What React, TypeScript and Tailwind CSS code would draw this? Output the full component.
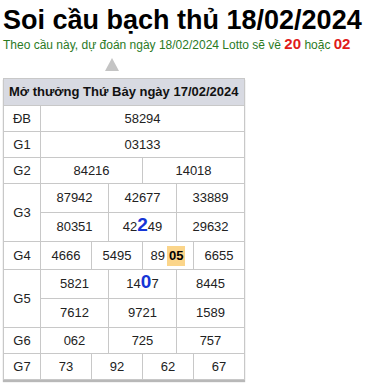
export default function App() {
  const cell = "border border-[#c8c8c8] text-center p-0";
  return (
    <div className="min-h-screen bg-white px-[3px] pt-[4px] font-['Liberation_Sans',Arial,sans-serif] text-[#222]">
      <h1 className="text-[27px] font-bold leading-[32px] text-black">Soi cầu bạch thủ 18/02/2024</h1>
      <p className="text-[12px] leading-[16px] text-[#2a7a1f]">
        Theo cầu này, dự đoán ngày 18/02/2024 Lotto sẽ về{" "}
        <span className="text-[15px] font-bold text-[#e01b1b]">20</span> hoặc{" "}
        <span className="text-[15px] font-bold text-[#e01b1b]">02</span>
      </p>
      <div className="flex pl-[102px] pt-[5px] pb-[7px]">
        <svg width="14" height="13" viewBox="0 0 14 13">
          <polygon points="7,0 14,13 0,13" fill="#c4c4c4" />
        </svg>
      </div>
      <table className="w-[242px] table-fixed border-collapse text-[13px] shadow-[0_2px_1px_#b8b8b8]">
        <colgroup>
          <col className="w-[37px]" />
          {Array.from({ length: 12 }).map((_, i) => (
            <col key={i} />
          ))}
        </colgroup>
        <tbody>
          <tr className="h-[27px] bg-[#d8dae2]">
            <th colSpan={13} className="whitespace-nowrap border border-[#c8c8c8] px-[5px] text-left text-[13px] font-bold text-[#111]">
              Mở thưởng Thứ Bảy ngày 17/02/2024
            </th>
          </tr>
          <tr className="h-[26px]">
            <td className={cell}>ĐB</td>
            <td colSpan={12} className={cell}>58294</td>
          </tr>
          <tr className="h-[26px]">
            <td className={cell}>G1</td>
            <td colSpan={12} className={cell}>03133</td>
          </tr>
          <tr className="h-[26px]">
            <td className={cell}>G2</td>
            <td colSpan={6} className={cell}>84216</td>
            <td colSpan={6} className={cell}>14018</td>
          </tr>
          <tr className="h-[29px]">
            <td rowSpan={2} className={cell}>G3</td>
            <td colSpan={4} className={cell}>87942</td>
            <td colSpan={4} className={cell}>42677</td>
            <td colSpan={4} className={cell}>33889</td>
          </tr>
          <tr className="h-[29px]">
            <td colSpan={4} className={cell}>80351</td>
            <td colSpan={4} className={cell}>
              42<span className="text-[19px] leading-[16px] font-bold text-[#1535d6]">2</span>49
            </td>
            <td colSpan={4} className={cell}>29632</td>
          </tr>
          <tr className="h-[28px]">
            <td className={cell}>G4</td>
            <td colSpan={3} className={cell}>4666</td>
            <td colSpan={3} className={cell}>5495</td>
            <td colSpan={3} className={cell}>
              89<span className="ml-[2px] inline-block bg-[#fbd58a] px-[2px] leading-[20px] font-bold text-black">05</span>
            </td>
            <td colSpan={3} className={cell}>6655</td>
          </tr>
          <tr className="h-[29px]">
            <td rowSpan={2} className={cell}>G5</td>
            <td colSpan={4} className={cell}>5821</td>
            <td colSpan={4} className={cell}>
              14<span className="text-[19px] leading-[16px] font-bold text-[#1535d6]">0</span>7
            </td>
            <td colSpan={4} className={cell}>8445</td>
          </tr>
          <tr className="h-[29px]">
            <td colSpan={4} className={cell}>7612</td>
            <td colSpan={4} className={cell}>9721</td>
            <td colSpan={4} className={cell}>1589</td>
          </tr>
          <tr className="h-[26px]">
            <td className={cell}>G6</td>
            <td colSpan={4} className={cell}>062</td>
            <td colSpan={4} className={cell}>725</td>
            <td colSpan={4} className={cell}>757</td>
          </tr>
          <tr className="h-[26px]">
            <td className={cell}>G7</td>
            <td colSpan={3} className={cell}>73</td>
            <td colSpan={3} className={cell}>92</td>
            <td colSpan={3} className={cell}>62</td>
            <td colSpan={3} className={cell}>67</td>
          </tr>
        </tbody>
      </table>
    </div>
  );
}
